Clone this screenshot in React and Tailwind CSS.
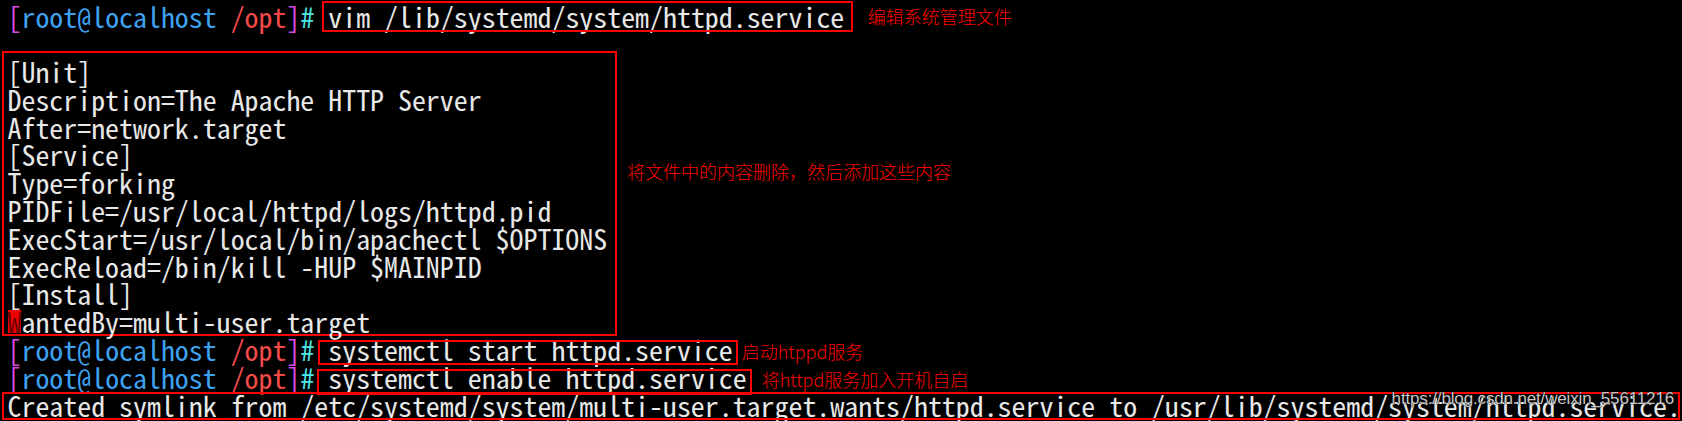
import React from "react";

function Prompt() {
  return (
    <span className="whitespace-pre">
      <span className="text-[#dc48e6]">[</span>
      <span className="text-[#3ea2f2]">root@localhost</span>
      {" "}
      <span className="text-[#f34a4a]">/opt</span>
      <span className="text-[#dc48e6]">]</span>
      <span className="text-[#4ee8e8]">#</span>
      {" "}
    </span>
  );
}

function Note({ children, className = "" }) {
  return (
    <span
      className={
        "whitespace-nowrap font-['Noto_Sans_CJK_SC','Noto_Sans',sans-serif] text-[18px] leading-[27.8px] text-[#ff0000] " +
        className
      }
    >
      {children}
    </span>
  );
}

const fileLines = [
  "[Unit]",
  "Description=The Apache HTTP Server",
  "After=network.target",
  "[Service]",
  "Type=forking",
  "PIDFile=/usr/local/httpd/logs/httpd.pid",
  "ExecStart=/usr/local/bin/apachectl $OPTIONS",
  "ExecReload=/bin/kill -HUP $MAINPID",
  "[Install]",
];

export default function App() {
  return (
    <div className="relative w-[1682px] h-[421px] overflow-hidden bg-black pt-[3px] text-[#e8e8e8] font-['Noto_Sans_Mono_CJK_SC','Liberation_Mono',monospace] font-light text-[27.9px] leading-[27.8px]">
      {/* row 1 */}
      <div className="flex items-start h-[27.8px] pl-[7.5px]">
        <Prompt />
        <span className="relative whitespace-pre">
          vim /lib/systemd/system/httpd.service
          <span className="absolute -left-[6.5px] -right-[8.4px] -top-[2px] -bottom-[1.2px] border-2 border-[#ff0000]" />
        </span>
        <Note className="ml-[23.4px]">编辑系统管理文件</Note>
      </div>

      {/* file contents box */}
      <div className="flex items-start mt-[20.2px]">
        <div className="ml-[2px] w-[615px] h-[285px] border-2 border-[#ff0000] pl-[3.5px] pt-[5px] shrink-0">
          {fileLines.map((l, i) => (
            <div key={i} className="whitespace-pre h-[27.8px]">
              {l}
            </div>
          ))}
          <div className="whitespace-pre h-[27.8px]">
            <span className="relative inline-block align-top h-[27.8px] w-[13.95px]">
              <span className="absolute left-0 right-0 top-[2px] bottom-[3px] bg-[#f00000]" />
              <span className="relative text-[#6a0000]">W</span>
            </span>
            antedBy=multi-user.target
          </div>
        </div>
        <Note className="ml-[10px] mt-[107px]">将文件中的内容删除，然后添加这些内容</Note>
      </div>

      {/* row: start */}
      <div className="flex items-start h-[27.8px] pl-[7.5px]">
        <Prompt />
        <span className="relative whitespace-pre">
          systemctl start httpd.service
          <span className="absolute -left-[10.5px] -right-[4.9px] top-[4px] -bottom-[1.2px] border-2 border-[#ff0000]" />
        </span>
        <Note className="ml-[9px] mt-[2px]">启动htppd服务</Note>
      </div>

      {/* row: enable */}
      <div className="flex items-start h-[27.8px] pl-[7.5px]">
        <Prompt />
        <span className="relative whitespace-pre">
          systemctl enable httpd.service
          <span className="absolute -left-[11.5px] -right-[5px] top-[5.5px] -bottom-[3px] border-2 border-[#ff0000]" />
        </span>
        <Note className="ml-[15px] mt-[2px]">将httpd服务加入开机自启</Note>
      </div>

      {/* row: created symlink */}
      <div className="relative h-[27.8px] pl-[7.5px] whitespace-pre">
        Created symlink from /etc/systemd/system/multi-user.target.wants/httpd.service to /usr/lib/systemd/system/httpd.service.
        <span className="absolute left-[2px] right-[2px] top-[0.4px] -bottom-[0.6px] border-2 border-[#ff0000]" />
      </div>

      {/* watermark */}
      <div className="absolute right-[8px] top-[389px] font-['Liberation_Sans',Arial,sans-serif] font-normal text-[17px] leading-[20px] tracking-[-0.15px] text-[#c8c8c8] [text-shadow:0_0_1px_#000,0_0_1px_#000]">
        https://blog.csdn.net/weixin_55611216
      </div>
    </div>
  );
}
